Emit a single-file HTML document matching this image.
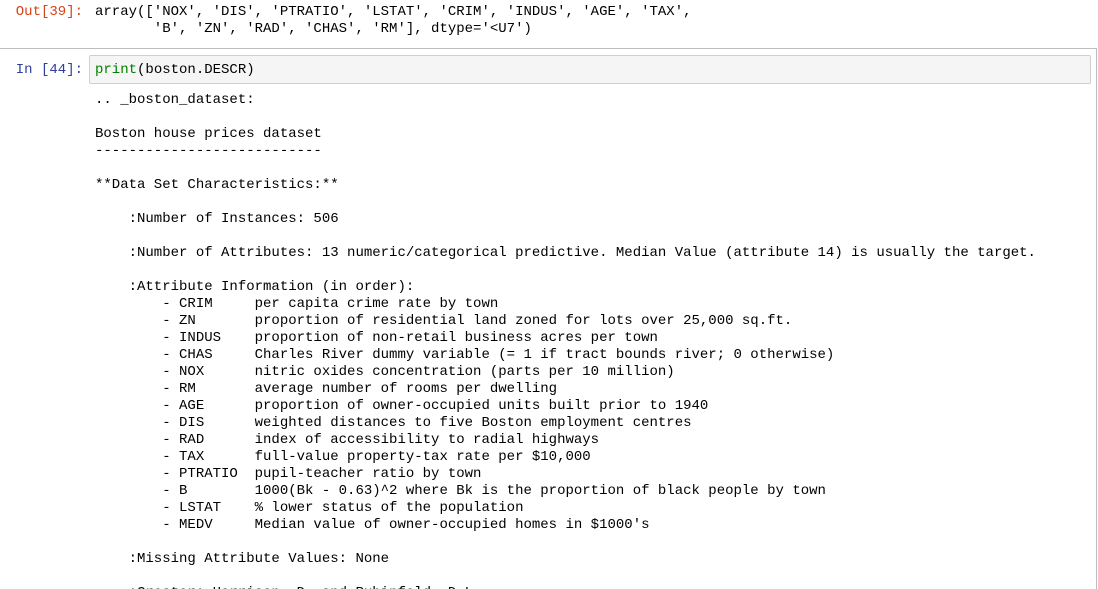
<!DOCTYPE html>
<html><head><style>
html,body{margin:0;padding:0;background:#fff;width:1098px;height:589px;overflow:hidden;position:relative}
pre,.p{font-family:"Liberation Mono",monospace;font-size:14px;line-height:17px;margin:0;position:absolute;white-space:pre;color:#000}
.out{color:#d84315;right:1015px;text-align:right}
.in{color:#303f9f;right:1015px;text-align:right}
.frame{position:absolute;left:0;top:48px;width:1096px;height:560px;border-top:1px solid #bdbdbd;border-right:1px solid #bdbdbd}
.box{position:absolute;left:89px;top:55px;width:1000px;height:27px;background:#f5f5f5;border:1px solid #cfcfcf;border-radius:2px}
.g{color:#008000}
</style></head><body>
<div class="p out" style="top:4px">Out[39]:</div>
<pre style="left:95px;top:4px">array(['NOX', 'DIS', 'PTRATIO', 'LSTAT', 'CRIM', 'INDUS', 'AGE', 'TAX',
       'B', 'ZN', 'RAD', 'CHAS', 'RM'], dtype='&lt;U7')</pre>
<div class="frame"></div>
<div class="box"></div>
<div class="p in" style="top:62px">In [44]:</div>
<pre style="left:95px;top:62px"><span class="g">print</span>(boston.DESCR)</pre>
<pre style="left:95px;top:92px">.. _boston_dataset:

Boston house prices dataset
---------------------------

**Data Set Characteristics:**

    :Number of Instances: 506

    :Number of Attributes: 13 numeric/categorical predictive. Median Value (attribute 14) is usually the target.

    :Attribute Information (in order):
        - CRIM     per capita crime rate by town
        - ZN       proportion of residential land zoned for lots over 25,000 sq.ft.
        - INDUS    proportion of non-retail business acres per town
        - CHAS     Charles River dummy variable (= 1 if tract bounds river; 0 otherwise)
        - NOX      nitric oxides concentration (parts per 10 million)
        - RM       average number of rooms per dwelling
        - AGE      proportion of owner-occupied units built prior to 1940
        - DIS      weighted distances to five Boston employment centres
        - RAD      index of accessibility to radial highways
        - TAX      full-value property-tax rate per $10,000
        - PTRATIO  pupil-teacher ratio by town
        - B        1000(Bk - 0.63)^2 where Bk is the proportion of black people by town
        - LSTAT    % lower status of the population
        - MEDV     Median value of owner-occupied homes in $1000's

    :Missing Attribute Values: None

    :Creator: Harrison, D. and Rubinfeld, D.L.</pre>
</body></html>
